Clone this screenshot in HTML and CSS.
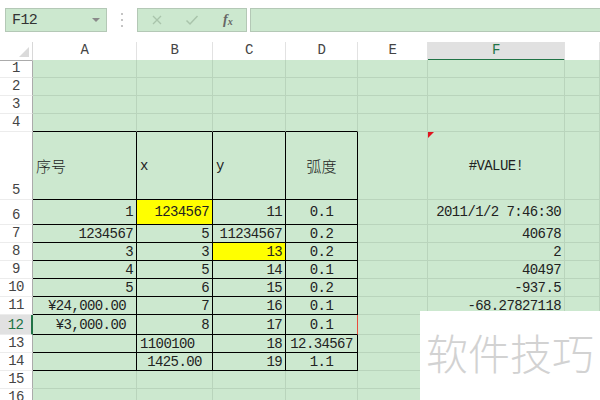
FILE: index.html
```html
<!DOCTYPE html>
<html lang="zh-CN">
<head>
    <meta charset="UTF-8">
    <title>Sheet</title>
    <link rel="stylesheet" href="styles.css">
</head>
<body>
    <div class="toolbar">
        <div class="namebox">
            <span>F12</span>
            <span class="drop"></span>
        </div>
        <div class="grip">
            <svg width="4" height="14" viewBox="0 0 4 14"><rect x="1" y="0" width="2" height="2" fill="#c4c4c4"/><rect x="1" y="6" width="2" height="2" fill="#c4c4c4"/><rect x="1" y="12" width="2" height="2" fill="#c4c4c4"/></svg>
        </div>
        <div class="fxbox">
            <svg class="btn" width="12" height="12" viewBox="0 0 12 12"><path d="M2 2 L10 10 M10 2 L2 10" stroke="#a9c4ab" stroke-width="1.3" fill="none"/></svg>
            <svg class="btn" width="14" height="12" viewBox="0 0 14 12"><path d="M1.5 6.5 L5 10 L12.5 2" stroke="#a9c4ab" stroke-width="1.5" fill="none"/></svg>
            <span class="fx"><i>f</i><sub>x</sub></span>
        </div>
        <div class="formula"></div>
    </div>

    <div class="sheet">
        <div class="row head">
            <div class="corner"><span class="tri"></span></div>
            <div class="ch">A</div>
            <div class="ch">B</div>
            <div class="ch">C</div>
            <div class="ch">D</div>
            <div class="ch">E</div>
            <div class="ch sel">F</div>
            <div class="ch"></div>
        </div>

        <div class="row">
            <div class="rh">1</div>
            <div class="cell"></div><div class="cell"></div><div class="cell"></div><div class="cell"></div>
            <div class="cell"></div><div class="cell"></div><div class="cell"></div>
        </div>
        <div class="row">
            <div class="rh">2</div>
            <div class="cell"></div><div class="cell"></div><div class="cell"></div><div class="cell"></div>
            <div class="cell"></div><div class="cell"></div><div class="cell"></div>
        </div>
        <div class="row">
            <div class="rh">3</div>
            <div class="cell"></div><div class="cell"></div><div class="cell"></div><div class="cell"></div>
            <div class="cell"></div><div class="cell"></div><div class="cell"></div>
        </div>
        <div class="row">
            <div class="rh">4</div>
            <div class="cell bb"></div><div class="cell bb"></div><div class="cell bb"></div><div class="cell bb"></div>
            <div class="cell"></div><div class="cell"></div><div class="cell"></div>
        </div>

        <div class="row tall">
            <div class="rh">5</div>
            <div class="cell bk"><span class="zh">序号</span></div>
            <div class="cell bk">x</div>
            <div class="cell bk">y</div>
            <div class="cell bk m"><span class="zh">弧度</span></div>
            <div class="cell"></div>
            <div class="cell m note">#VALUE!</div>
            <div class="cell"></div>
        </div>

        <div class="row mid">
            <div class="rh">6</div>
            <div class="cell bk r">1</div>
            <div class="cell bk r hl">1234567</div>
            <div class="cell bk r">11</div>
            <div class="cell bk m">0.1</div>
            <div class="cell"></div>
            <div class="cell r">2011/1/2 7:46:30</div>
            <div class="cell"></div>
        </div>

        <div class="row">
            <div class="rh">7</div>
            <div class="cell bk r">1234567</div>
            <div class="cell bk r">5</div>
            <div class="cell bk r">11234567</div>
            <div class="cell bk m">0.2</div>
            <div class="cell"></div>
            <div class="cell r">40678</div>
            <div class="cell"></div>
        </div>
        <div class="row">
            <div class="rh">8</div>
            <div class="cell bk r">3</div>
            <div class="cell bk r">3</div>
            <div class="cell bk r hl">13</div>
            <div class="cell bk m">0.2</div>
            <div class="cell"></div>
            <div class="cell r">2</div>
            <div class="cell"></div>
        </div>
        <div class="row">
            <div class="rh">9</div>
            <div class="cell bk r">4</div>
            <div class="cell bk r">5</div>
            <div class="cell bk r">14</div>
            <div class="cell bk m">0.1</div>
            <div class="cell"></div>
            <div class="cell r">40497</div>
            <div class="cell"></div>
        </div>
        <div class="row">
            <div class="rh">10</div>
            <div class="cell bk r">5</div>
            <div class="cell bk r">6</div>
            <div class="cell bk r">15</div>
            <div class="cell bk m">0.2</div>
            <div class="cell"></div>
            <div class="cell r">-937.5</div>
            <div class="cell"></div>
        </div>
        <div class="row">
            <div class="rh">11</div>
            <div class="cell bk r acc">¥24,000.00</div>
            <div class="cell bk r">7</div>
            <div class="cell bk r">16</div>
            <div class="cell bk m">0.1</div>
            <div class="cell"></div>
            <div class="cell r">-68.27827118</div>
            <div class="cell"></div>
        </div>
        <div class="row r12">
            <div class="rh cur">12</div>
            <div class="cell bk r acc">¥3,000.00</div>
            <div class="cell bk r">8</div>
            <div class="cell bk r">17</div>
            <div class="cell bk m red">0.1</div>
            <div class="cell"></div>
            <div class="cell"></div>
            <div class="cell"></div>
        </div>
        <div class="row">
            <div class="rh">13</div>
            <div class="cell bk"></div>
            <div class="cell bk">1100100</div>
            <div class="cell bk r">18</div>
            <div class="cell bk m">12.34567</div>
            <div class="cell"></div>
            <div class="cell"></div>
            <div class="cell"></div>
        </div>
        <div class="row">
            <div class="rh">14</div>
            <div class="cell bk"></div>
            <div class="cell bk m">1425.00</div>
            <div class="cell bk r">19</div>
            <div class="cell bk m">1.1</div>
            <div class="cell"></div>
            <div class="cell"></div>
            <div class="cell"></div>
        </div>
        <div class="row">
            <div class="rh">15</div>
            <div class="cell"></div><div class="cell"></div><div class="cell"></div><div class="cell"></div>
            <div class="cell"></div><div class="cell"></div><div class="cell"></div>
        </div>
        <div class="row">
            <div class="rh">16</div>
            <div class="cell"></div><div class="cell"></div><div class="cell"></div><div class="cell"></div>
            <div class="cell"></div><div class="cell"></div><div class="cell"></div>
        </div>
    </div>

    <div class="watermark">软件技巧</div>
</body>
</html>
```

FILE: styles.css
```css
* {
    margin: 0;
    padding: 0;
    box-sizing: border-box;
}

body {
    width: 600px;
    height: 400px;
    overflow: hidden;
    position: relative;
    background: #fff;
    font-family: "Liberation Mono", "Noto Sans CJK SC", monospace;
    font-size: 14px;
    letter-spacing: -0.6px;
    color: #222;
}

/* formula bar */
.toolbar {
    display: flex;
    align-items: flex-start;
    height: 42px;
    padding: 8px 0 0 5px;
}

.namebox {
    position: relative;
    width: 102px;
    height: 24px;
    background: #cce8cf;
    border: 1px solid #b4c8b6;
    font-size: 15px;
    color: #333;
    padding: 3px 0 0 6px;
}

.namebox .drop {
    position: absolute;
    right: 6px;
    top: 9px;
    border-left: 4px solid transparent;
    border-right: 4px solid transparent;
    border-top: 4px solid #8a8a8a;
}

.grip {
    width: 30px;
    height: 24px;
    display: flex;
    align-items: center;
    justify-content: center;
}

.fxbox {
    width: 110px;
    height: 24px;
    background: #cce8cf;
    border: 1px solid #b4c8b6;
    display: flex;
    align-items: center;
    padding-left: 13px;
}

.fxbox .btn {
    margin-right: 22px;
}

.fxbox .btn + .btn {
    margin-right: 24px;
}

.fx {
    font-family: "Liberation Serif", serif;
    font-size: 14px;
    color: #666;
    letter-spacing: 0;
    font-weight: bold;
}

.fx sub {
    font-size: 10px;
    font-style: italic;
    vertical-align: -1px;
}

.formula {
    flex: 1;
    margin-left: 3px;
    height: 24px;
    background: #cce8cf;
    border: 1px solid #b4c8b6;
    border-right: none;
}

/* grid */
.row {
    display: grid;
    grid-template-columns: 33px 104px 76px 73px 72px 70px 137px 1fr;
    height: 18px;
}

.row.tall { height: 68px; }
.row.mid { height: 25px; }
.row.r12 { height: 20px; }

.corner {
    position: relative;
    border-right: 1px solid #d8d8d8;
    border-bottom: 1px solid #ababab;
}

.corner .tri {
    position: absolute;
    right: 3px;
    bottom: 3px;
    border-left: 10px solid transparent;
    border-bottom: 10px solid #dadada;
}

.ch {
    border-right: 1px solid #e2e2e2;
    border-bottom: 1px solid #ababab;
    text-align: center;
    line-height: 17px;
    color: #444;
}

.ch.sel {
    background: #e1e1e1;
    color: #217346;
    border-bottom: 2px solid #217346;
}

.rh {
    display: flex;
    align-items: flex-end;
    justify-content: center;
    border-right: 1px solid #ababab;
    border-bottom: 1px solid #ececec;
    color: #444;
    line-height: 17px;
}

.rh.cur {
    background: #e1e1e1;
    border-right: 2px solid #217346;
    color: #217346;
}

.cell {
    position: relative;
    display: flex;
    align-items: center;
    padding: 0 3px;
    background: #cce8cf;
    border-right: 1px solid #b9d4bc;
    border-bottom: 1px solid #b9d4bc;
    white-space: nowrap;
}

.cell.bk {
    border-right-color: #000;
    border-bottom-color: #000;
}

.cell.bb {
    border-bottom-color: #000;
}

.cell.red {
    border-right-color: #e84c3d;
}

.cell.r { justify-content: flex-end; }
.cell.m { justify-content: center; }
.cell.acc { padding-right: 10px; }
.cell.hl { background: #ffff00; }

.zh {
    font-family: "Noto Sans CJK SC", sans-serif;
    font-size: 15px;
    letter-spacing: 0;
    font-weight: 300;
}

.note::before {
    content: "";
    position: absolute;
    left: 0;
    top: 0;
    border-top: 6px solid #e0141e;
    border-right: 6px solid transparent;
}

.watermark {
    position: absolute;
    left: 420px;
    top: 311px;
    width: 180px;
    height: 89px;
    background: #fff;
    padding: 16px 0 0 6px;
    font-family: "Noto Sans CJK SC", sans-serif;
    font-size: 42px;
    font-weight: 300;
    letter-spacing: 0;
    color: #d2d2d2;
    line-height: 50px;
}
```
